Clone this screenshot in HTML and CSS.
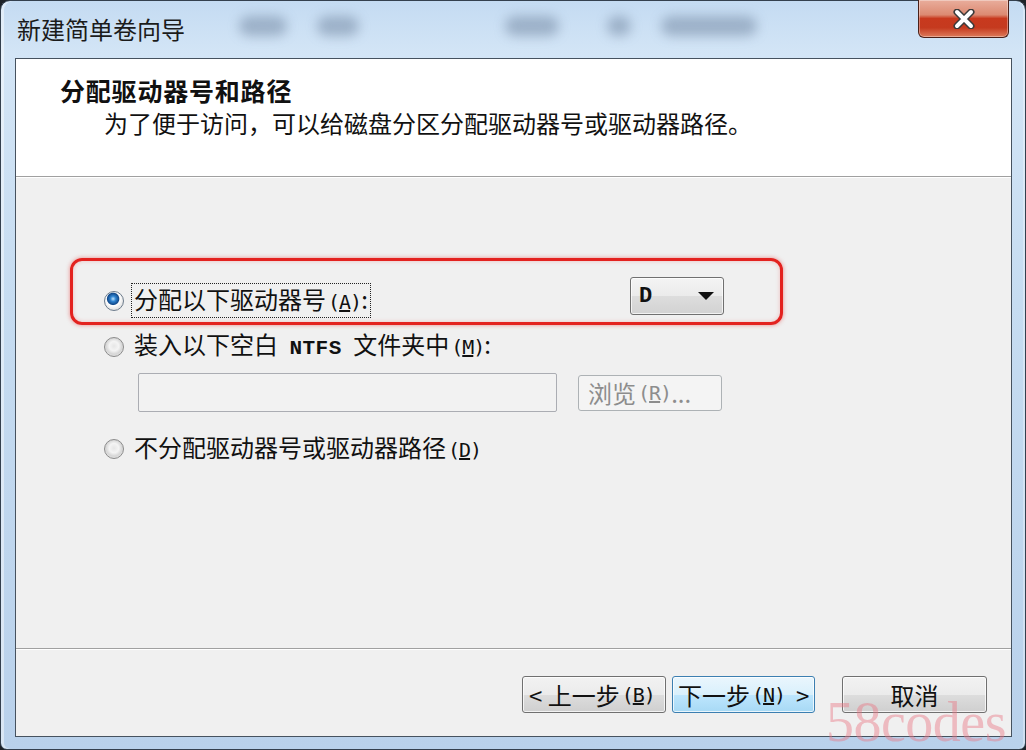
FILE: index.html
```html
<!DOCTYPE html>
<html lang="zh-CN">
<head>
    <meta charset="UTF-8">
    <title>新建简单卷向导</title>
    <link rel="stylesheet" href="styles.css">
</head>
<body>
    <div class="window">
        <div class="titlebar">
            <span class="title">新建简单卷向导</span>
            <div class="glass">
                <span class="blob b1"></span>
                <span class="blob b2"></span>
                <span class="blob b3"></span>
                <span class="blob b4"></span>
                <span class="blob b5"></span>
            </div>
            <button class="close" aria-label="关闭">
                <svg width="26" height="20" viewBox="0 0 26 20">
                    <path d="M6 3 L20 17 M20 3 L6 17" stroke="#3a3a3a" stroke-width="7" stroke-linecap="round"/>
                    <path d="M6 3 L20 17 M20 3 L6 17" stroke="#ffffff" stroke-width="4" stroke-linecap="round"/>
                </svg>
            </button>
        </div>

        <div class="client">
            <div class="header">
                <div class="heading">分配驱动器号和路径</div>
                <div class="subheading">为了便于访问，可以给磁盘分区分配驱动器号或驱动器路径。</div>
            </div>

            <div class="content">
                <div class="highlight">
                    <div class="option option-first">
                        <span class="radio checked"></span>
                        <span class="label focused">分配以下驱动器号<span class="key">(<u>A</u>)</span>:</span>
                    </div>
                    <div class="dropdown">
                        <span class="drive">D</span>
                        <span class="arrow"></span>
                    </div>
                </div>

                <div class="option option-row">
                    <span class="radio"></span>
                    <span class="label">装入以下空白 <span class="mono">NTFS</span> 文件夹中<span class="key">(<u>M</u>)</span>:</span>
                </div>

                <div class="path-row">
                    <div class="textbox"></div>
                    <button class="btn disabled">浏览<span class="key">(<u>R</u>)</span>...</button>
                </div>

                <div class="option option-row option-last">
                    <span class="radio"></span>
                    <span class="label">不分配驱动器号或驱动器路径<span class="key">(<u>D</u>)</span></span>
                </div>
            </div>

            <div class="footer">
                <button class="btn btn-back">&lt; 上一步<span class="key">(<u>B</u>)</span></button>
                <button class="btn btn-next">下一步<span class="key">(<u>N</u>)</span>&nbsp;&nbsp;&gt;</button>
                <button class="btn btn-cancel">取消</button>
            </div>
        </div>
    </div>

    <div class="watermark">58codes</div>
</body>
</html>
```

FILE: styles.css
```css
:root {
    --face: #f0f0f0;
    --line: #a0a0a0;
    --ui-font: "Noto Sans CJK SC", "Noto Sans", sans-serif;
}
* {
    box-sizing: border-box;
}
body {
    margin: 0;
    width: 1026px;
    height: 750px;
    overflow: hidden;
    background: #1d2228;
    font-family: var(--ui-font);
    color: #111;
}
.window {
    position: relative;
    height: 750px;
    border: 1px solid #34404e;
    border-radius: 10px 10px 7px 7px;
    background: linear-gradient(180deg, #c4dbf2 0%, #d3e5f6 7%, #c6dcf1 40%, #b9d1eb 100%);
    box-shadow: inset 3px 0 0 rgba(255,255,255,0.45), inset -2px 0 0 rgba(255,255,255,0.3);
    padding: 0 13px 12px 14px;
    display: flex;
    flex-direction: column;
}
.titlebar {
    height: 57px;
    display: flex;
    align-items: flex-start;
}
.title {
    margin-top: 12px;
    padding-left: 2px;
    font-size: 24px;
    line-height: 32px;
    color: #1b1b1b;
}
.glass {
    display: flex;
    gap: 30px;
    margin-left: 54px;
    margin-top: 15px;
}
.blob {
    display: block;
    height: 20px;
    border-radius: 10px;
    background: rgba(80,100,130,0.38);
    filter: blur(6px);
}
.b1 { width: 48px; }
.b2 { width: 42px; }
.b3 { width: 54px; margin-left: 116px; }
.b4 { width: 24px; margin-left: 18px; }
.b5 { width: 96px; }
.close {
    margin-left: auto;
    margin-right: 3px;
    margin-top: -1px;
    width: 91px;
    height: 38px;
    border: 1px solid #4b2018;
    border-top: none;
    border-radius: 0 0 6px 6px;
    background: linear-gradient(180deg, #e9ad9c 0%, #dc8a72 40%, #c8391e 50%, #c53a1f 75%, #dd7b5b 100%);
    box-shadow: inset 0 0 0 1px rgba(255,255,255,0.35);
    display: flex;
    align-items: center;
    justify-content: center;
    padding: 0;
}
.client {
    flex: 1;
    border: 1px solid #46525f;
    background: var(--face);
    display: flex;
    flex-direction: column;
}
.header {
    height: 118px;
    background: #fff;
    border-bottom: 1px solid var(--line);
    box-shadow: 0 1px 0 #fff;
    padding: 16px 0 0 44px;
}
.heading {
    font-size: 25px;
    line-height: 30px;
    font-weight: bold;
    letter-spacing: 0.8px;
}
.subheading {
    margin-top: 3px;
    margin-left: 44px;
    font-size: 24px;
    line-height: 30px;
}
.content {
    flex: 1;
    padding: 81px 0 0 54px;
}
.highlight {
    width: 713px;
    height: 67px;
    border: 3px solid #e3221f;
    border-radius: 12px;
    box-shadow: 0 0 4px rgba(227,34,31,0.5), inset 0 0 4px rgba(227,34,31,0.25);
    display: flex;
    align-items: flex-start;
    padding: 16px 0 0 31px;
}
.option {
    display: flex;
    align-items: center;
    font-size: 24px;
    line-height: 30px;
}
.option-first {
    width: 526px;
    margin-top: 7px;
}
.option-row {
    margin-top: 4px;
    padding-left: 34px;
}
.option-last {
    margin-top: 20px;
}
.radio {
    width: 20px;
    height: 20px;
    border-radius: 50%;
    border: 1px solid #8b8b8b;
    background: radial-gradient(circle at 50% 45%, #e6e6e6 0, #f4f4f4 35%, #d6d6d6 60%, #f7f7f7 100%);
    margin-right: 8px;
    flex: none;
}
.radio.checked {
    border-color: #6d7c8c;
    background: radial-gradient(circle at 45% 38%, #bfe3ff 0, #2f83cf 18%, #124a8c 38%, #ffffff 45%, #e0e0e0 75%, #f7f7f7 100%);
}
.label {
    white-space: nowrap;
    padding: 0 2px;
}
.focused {
    outline: 1px dotted #222;
    outline-offset: 0;
}
.key {
    font-family: "DejaVu Sans Mono", monospace;
    font-size: 20px;
    letter-spacing: -1px;
    margin-left: 2px;
}
.mono {
    font-family: "Liberation Mono", monospace;
    font-size: 21px;
    font-weight: bold;
    letter-spacing: 0.5px;
    margin: 0 6px;
}
.dropdown {
    width: 94px;
    height: 38px;
    border: 1px solid #707070;
    border-radius: 3px;
    background: linear-gradient(180deg, #f4f4f4 0%, #ebebeb 50%, #dddddd 51%, #d2d2d2 100%);
    box-shadow: inset 0 0 0 1px rgba(255,255,255,0.7);
    display: flex;
    align-items: center;
    padding: 0 9px 0 8px;
}
.drive {
    font-family: "Liberation Mono", monospace;
    font-weight: bold;
    font-size: 22px;
}
.arrow {
    margin-left: auto;
    width: 0;
    height: 0;
    border-left: 8px solid transparent;
    border-right: 8px solid transparent;
    border-top: 8px solid #111;
}
.path-row {
    display: flex;
    align-items: center;
    margin-top: 9px;
    padding-left: 68px;
}
.textbox {
    width: 419px;
    height: 39px;
    border: 1px solid #abadb3;
    border-radius: 2px;
    background: #f2f2f2;
}
.btn {
    height: 37px;
    border: 1px solid #707070;
    border-radius: 3px;
    background: linear-gradient(180deg, #f2f2f2 0%, #ebebeb 50%, #dddddd 51%, #cfcfcf 100%);
    box-shadow: inset 0 0 0 1px rgba(255,255,255,0.75);
    font-family: var(--ui-font);
    font-size: 24px;
    line-height: 30px;
    color: #111;
    padding: 0 6px;
    display: flex;
    align-items: center;
    white-space: nowrap;
}
.btn.disabled {
    margin-left: 21px;
    width: 144px;
    height: 36px;
    border-color: #adb2b5;
    background: #f4f4f4;
    color: #8d8d8d;
    box-shadow: none;
    padding-left: 9px;
}
.footer {
    height: 88px;
    border-top: 1px solid var(--line);
    box-shadow: inset 0 1px 0 #fff;
    display: flex;
    justify-content: flex-end;
    align-items: flex-start;
    padding: 27px 24px 0 0;
}
.btn-back {
    width: 144px;
}
.btn-next {
    width: 143px;
    margin-left: 6px;
    border-color: #3c7fb1;
    background: linear-gradient(180deg, #eaf6fd 0%, #d9f0fc 50%, #bee6fd 51%, #a7d9f5 100%);
    padding-left: 5px;
}
.btn-cancel {
    width: 145px;
    margin-left: 27px;
    justify-content: center;
}
.watermark {
    position: absolute;
    left: 826px;
    top: 694px;
    font-family: "Liberation Serif", serif;
    font-size: 56px;
    line-height: 1;
    color: rgba(232, 120, 132, 0.45);
    letter-spacing: -0.5px;
}
```
